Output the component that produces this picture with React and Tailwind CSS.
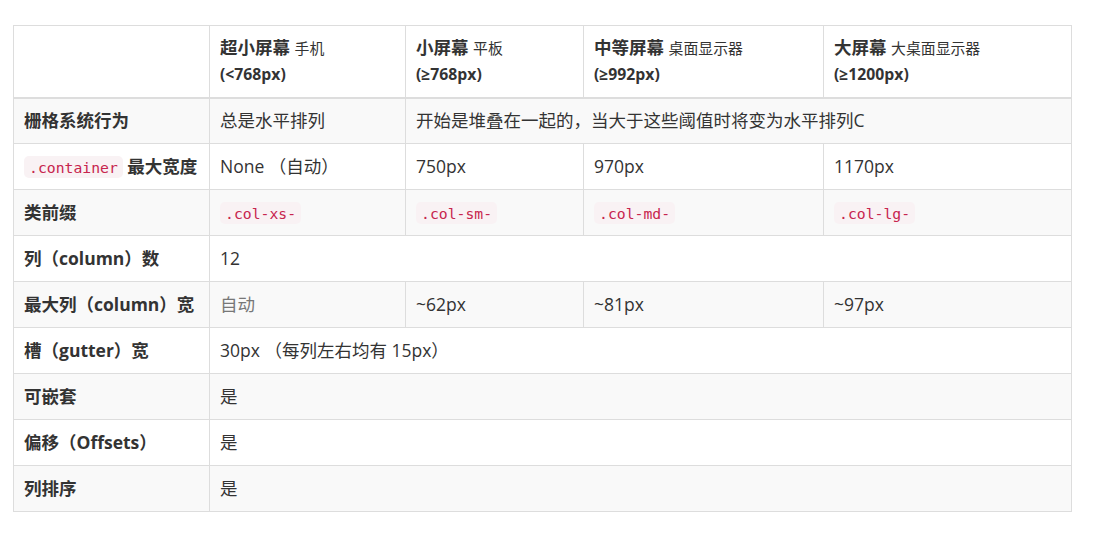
import React from 'react'

const sans = { fontFamily: '"Open Sans", "Noto Sans CJK SC", sans-serif' }

function Code({ children }) {
  return (
    <code
      className="rounded-[5px] bg-[#f9f2f4] px-[5px] py-[2.5px] text-[14.75px] font-normal text-[#c7254e]"
      style={{ fontFamily: '"DejaVu Sans Mono", "Liberation Mono", monospace' }}
    >
      {children}
    </code>
  )
}

const headers = [
  ['超小屏幕', '手机', '(<768px)'],
  ['小屏幕', '平板', '(≥768px)'],
  ['中等屏幕', '桌面显示器', '(≥992px)'],
  ['大屏幕', '大桌面显示器', '(≥1200px)'],
]

const td = 'border border-[#ddd] px-[10px] py-0 align-middle'
const th = td + ' font-bold'

export default function App() {
  return (
    <div className="min-h-[536px] bg-white pl-[13px] pt-[25px] text-[17.5px] leading-[25px] text-[#333]" style={sans}>
      <table className="w-[1058px] table-fixed border-collapse text-left">
        <colgroup>
          <col className="w-[196px]" />
          <col className="w-[196px]" />
          <col className="w-[178px]" />
          <col className="w-[240px]" />
          <col className="w-[248px]" />
        </colgroup>
        <thead>
          <tr className="h-[72px]">
            <th className="border border-b-2 border-[#ddd] px-[10px] py-0"></th>
            {headers.map((h) => (
              <th key={h[0]} className="border border-b-2 border-[#ddd] px-[10px] py-0 align-middle font-bold">
                {h[0]} <small className="text-[14.875px] font-normal">{h[1]}</small>
                <br />
                <span className="text-[15.75px]">{h[2]}</span>
              </th>
            ))}
          </tr>
        </thead>
        <tbody>
          <tr className="h-[46px] bg-[#f9f9f9]">
            <th className={th}>栅格系统行为</th>
            <td className={td}>总是水平排列</td>
            <td className={td} colSpan={3}>开始是堆叠在一起的，当大于这些阈值时将变为水平排列C</td>
          </tr>
          <tr className="h-[46px]">
            <th className={th}>
              <Code>.container</Code> 最大宽度
            </th>
            <td className={td}>None （自动）</td>
            <td className={td}>750px</td>
            <td className={td}>970px</td>
            <td className={td}>1170px</td>
          </tr>
          <tr className="h-[46px] bg-[#f9f9f9]">
            <th className={th}>类前缀</th>
            <td className={td}><Code>.col-xs-</Code></td>
            <td className={td}><Code>.col-sm-</Code></td>
            <td className={td}><Code>.col-md-</Code></td>
            <td className={td}><Code>.col-lg-</Code></td>
          </tr>
          <tr className="h-[46px]">
            <th className={th}>列（column）数</th>
            <td className={td} colSpan={4}>12</td>
          </tr>
          <tr className="h-[46px] bg-[#f9f9f9]">
            <th className={th}>最大列（column）宽</th>
            <td className={td + ' text-[#777]'}>自动</td>
            <td className={td}>~62px</td>
            <td className={td}>~81px</td>
            <td className={td}>~97px</td>
          </tr>
          <tr className="h-[46px]">
            <th className={th}>槽（gutter）宽</th>
            <td className={td} colSpan={4}>30px （每列左右均有 15px）</td>
          </tr>
          <tr className="h-[46px] bg-[#f9f9f9]">
            <th className={th}>可嵌套</th>
            <td className={td} colSpan={4}>是</td>
          </tr>
          <tr className="h-[46px]">
            <th className={th}>偏移（Offsets）</th>
            <td className={td} colSpan={4}>是</td>
          </tr>
          <tr className="h-[46px] bg-[#f9f9f9]">
            <th className={th}>列排序</th>
            <td className={td} colSpan={4}>是</td>
          </tr>
        </tbody>
      </table>
    </div>
  )
}
